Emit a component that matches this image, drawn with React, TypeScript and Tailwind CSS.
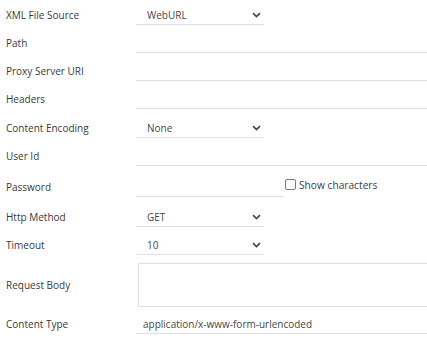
import React from "react";

const Chevron = () => (
  <svg width="9" height="6" viewBox="0 0 9 6" className="shrink-0">
    <path d="M1 1.2 L4.5 4.6 L8 1.2" fill="none" stroke="#4a4a4a" strokeWidth="1.8" />
  </svg>
);

const Label = ({ children }: { children: React.ReactNode }) => (
  <div className="w-[136px] shrink-0 pl-[6px] h-[20px] leading-[20px] text-[#3a3a3a]">{children}</div>
);

const Select = ({ value }: { value: string }) => (
  <div className="w-[128px] h-[20px] border-b border-[#dde0e5] flex items-center justify-between pl-[11px] pr-[3px] text-[#474747]">
    <span className="leading-[20px]">{value}</span>
    <Chevron />
  </div>
);

const Input = ({ value, className = "" }: { value?: string; className?: string }) => (
  <div className={`h-[20px] border-b border-[#dde0e5] leading-[20px] pl-[7px] text-[#474747] ${className}`}>{value}</div>
);

export default function App() {
  return (
    <div className="w-[427px] h-[339px] bg-white overflow-hidden text-[10px]" style={{ fontFamily: '"Open Sans", sans-serif' }}>
      <div className="flex flex-col">
        <div className="flex items-end mt-[5px]">
          <Label>XML File Source</Label>
          <Select value="WebURL" />
        </div>
        <div className="flex items-end mt-[8px]">
          <Label>Path</Label>
          <Input className="flex-1" />
        </div>
        <div className="flex items-end mt-[8px]">
          <Label>Proxy Server URI</Label>
          <Input className="flex-1" />
        </div>
        <div className="flex items-end mt-[8px]">
          <Label>Headers</Label>
          <Input className="flex-1" />
        </div>
        <div className="flex items-end mt-[9px]">
          <Label>Content Encoding</Label>
          <Select value="None" />
        </div>
        <div className="flex items-end mt-[8px]">
          <Label>User Id</Label>
          <Input className="flex-1" />
        </div>
        <div className="flex items-end mt-[11px]">
          <Label>Password</Label>
          <Input className="w-[148px]" />
          <div className="flex items-center h-[20px] self-start -mt-[1px]">
            <div className="w-[11px] h-[11px] border border-[#7a7a7a] rounded-[2px] ml-[1px] -mt-[3px]" />
            <span className="ml-[3px] text-[10.2px] text-[#3d3d48]">Show characters</span>
          </div>
        </div>
        <div className="flex items-end mt-[10px]">
          <Label>Http Method</Label>
          <Select value="GET" />
        </div>
        <div className="flex items-end mt-[8px]">
          <Label>Timeout</Label>
          <Select value="10" />
        </div>
        <div className="flex items-center mt-[8px]">
          <Label>Request Body</Label>
          <div className="ml-[2px] flex-1 h-[44px] border border-r-0 border-[#dde0e5]" />
        </div>
        <div className="flex items-end mt-[7px]">
          <Label>Content Type</Label>
          <Input className="flex-1" value="application/x-www-form-urlencoded" />
        </div>
      </div>
    </div>
  );
}
